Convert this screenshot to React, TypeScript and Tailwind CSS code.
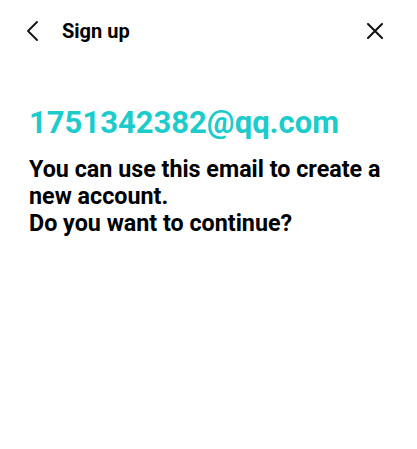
import React from 'react';

export default function App() {
  return (
    <div className="w-[417px] h-[449px] bg-white font-['Roboto',sans-serif] text-black">
      {/* Header */}
      <div className="flex items-center h-[62px] pl-[26px] pr-[34px]">
        <button className="w-[12px] h-[20px] flex items-center justify-center">
          <svg width="12" height="20" viewBox="0 0 12 20" fill="none" stroke="#111" strokeWidth="1.8" strokeLinecap="round" strokeLinejoin="round">
            <path d="M11 1 L2 10 L11 19" />
          </svg>
        </button>
        <h1 className="ml-[24px] text-[20px] font-bold leading-none">Sign up</h1>
        <button className="ml-auto w-[16px] h-[16px] flex items-center justify-center">
          <svg width="16" height="16" viewBox="0 0 16 16" fill="none" stroke="#111" strokeWidth="2" strokeLinecap="round">
            <path d="M1 1 L15 15 M15 1 L1 15" />
          </svg>
        </button>
      </div>

      {/* Content */}
      <div className="px-[29px] pt-[43px]">
        <p className="text-[31px] font-bold leading-[36px] text-[#1ccbcb]">1751342382@qq.com</p>
        <p className="mt-[15px] text-[23.3px] font-bold leading-[27px]">
          You can use this email to create a new account.
          <br />
          Do you want to continue?
        </p>
      </div>
    </div>
  );
}
